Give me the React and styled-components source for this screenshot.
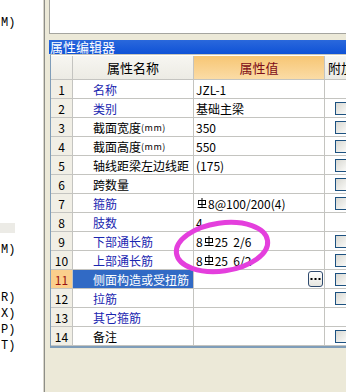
import React from "react";
import styled, { createGlobalStyle } from "styled-components";

const GlobalStyle = createGlobalStyle`
  html, body {
    margin: 0;
    padding: 0;
    background: #ece9d8;
  }
  body {
    font-family: "Noto Sans CJK SC", "Liberation Sans", sans-serif;
    font-size: 12px;
  }
`;

const Page = styled.div`
  display: flex;
  width: 346px;
  height: 392px;
  overflow: hidden;
  background: #ece9d8;
`;

const LeftPane = styled.div`
  width: 43px;
  flex-shrink: 0;
  background: #fff;
  border-right: 1px solid #d8d6cc;
  box-shadow: 1px 0 0 #8e8e88;
  display: flex;
  flex-direction: column;
  overflow: hidden;
`;

const MenuLine = styled.div`
  height: 15px;
  line-height: 15px;
  margin-top: ${(p) => p.$gap || 0}px;
  padding-left: 1px;
  font-family: "Liberation Mono", "DejaVu Sans Mono", monospace;
  font-size: 12px;
  color: #000;
  white-space: pre;
`;

const MenuHighlight = styled.div`
  width: 15px;
  height: 10px;
  margin-top: ${(p) => p.$gap || 0}px;
  background: #ecebe6;
`;

const Gutter = styled.div`
  width: 5px;
  flex-shrink: 0;
`;

const RightPane = styled.div`
  flex: 1;
  display: flex;
  flex-direction: column;
  min-width: 0;
`;

const TopPanel = styled.div`
  height: 33px;
  background: #fff;
  border-left: 1px solid #a5a59f;
  border-bottom: 1px solid #a5a59f;
`;

const TitleBar = styled.div`
  margin-top: 6px;
  height: 14px;
  line-height: 14px;
  padding-left: 1px;
  background: linear-gradient(#2a68dc, #0f52d6);
  color: #fff;
  font-size: 13px;
  white-space: nowrap;
`;

const TableWrap = styled.div`
  position: relative;
  margin-left: 1px;
  border-left: 1px solid #7f9db9;
  border-top: 1px solid #c9c7ba;
  border-bottom: 2px solid #7f9db9;
  background: #fff;
  padding-top: 1px;
`;

const Grid = styled.div`
  display: grid;
  grid-template-columns: 22px 121px 131px 60px;
  grid-template-rows: 24px repeat(14, 19px);
`;

const Cell = styled.div`
  box-sizing: border-box;
  border-right: 1px solid #c4c4c0;
  border-bottom: 1px solid #c4c4c0;
  display: flex;
  align-items: center;
  white-space: pre;
  overflow: hidden;
  position: relative;
`;

const HeadCell = styled(Cell)`
  justify-content: ${(p) => (p.$left ? "flex-start" : "center")};
  padding-left: ${(p) => (p.$left ? 3 : 0)}px;
  font-size: 13px;
  color: ${(p) => (p.$accent ? "#7d0c17" : "#000")};
  background: ${(p) =>
    p.$accent
      ? "linear-gradient(#f7c674, #fbdca6)"
      : "linear-gradient(#f7f6f1, #ecebe4)"};
`;

const NumCell = styled(Cell)`
  justify-content: center;
  font-size: 12px;
  color: ${(p) => (p.$active ? "#9a1010" : "#000")};
  background: ${(p) => (p.$active ? "#fbcf8c" : "#f1efe6")};
`;

const NameCell = styled(Cell)`
  padding-left: 20px;
  font-size: 12px;
  color: ${(p) => (p.$selected ? "#fff" : p.$blue ? "#1a26b0" : "#000")};
  background: ${(p) => (p.$selected ? "#316ac5" : "#fff")};
`;

const Small = styled.span`
  font-size: 9px;
  letter-spacing: 0.5px;
`;

const ValueCell = styled(Cell)`
  padding-left: 2px;
  font-size: 12px;
  color: #000;
`;

const ExtraCell = styled(Cell)`
  padding-left: 10px;
  border-right: none;
`;

const CheckBox = styled.div`
  width: 11px;
  height: 11px;
  border: 1px solid #1c5180;
  background: linear-gradient(135deg, #d8d8d2, #fbfbf9);
`;

const EllipsisButton = styled.div`
  position: absolute;
  right: 1px;
  top: 1px;
  width: 13px;
  height: 14px;
  border: 1px solid #2f4a6e;
  border-radius: 3px;
  background: linear-gradient(#ffffff, #e6e6e0);
  display: flex;
  align-items: center;
  justify-content: center;
`;

const Marker = styled.svg`
  position: absolute;
  left: 115px;
  top: 160px;
  pointer-events: none;
`;

const Bar = () => (
  <svg width="10" height="12" viewBox="0 0 10 12" style={{ margin: "0 1px" }}>
    <rect x="1.5" y="3.5" width="7" height="4" fill="none" stroke="#000" />
    <line x1="5" y1="1" x2="5" y2="10" stroke="#000" />
    <line x1="0.5" y1="10.5" x2="9.5" y2="10.5" stroke="#000" />
  </svg>
);

const Dots = () => (
  <svg width="11" height="4" viewBox="0 0 11 4">
    <rect x="0.5" y="1" width="2" height="2" fill="#000" />
    <rect x="4.5" y="1" width="2" height="2" fill="#000" />
    <rect x="8.5" y="1" width="2" height="2" fill="#000" />
  </svg>
);

const rows = [
  { name: "名称", blue: true, value: "JZL-1", check: false },
  { name: "类别", blue: true, value: "基础主梁", check: true },
  { name: "截面宽度", unit: "(mm)", value: "350", check: true },
  { name: "截面高度", unit: "(mm)", value: "550", check: true },
  { name: "轴线距梁左边线距", value: "(175)", check: true },
  { name: "跨数量", value: "", check: true },
  { name: "箍筋", blue: true, value: <> <Bar />8@100/200(4)</>, check: true },
  { name: "肢数", blue: true, value: "4", check: false },
  { name: "下部通长筋", blue: true, value: <>8<Bar />25  2/6</>, check: true },
  { name: "上部通长筋", blue: true, value: <>8<Bar />25  6/2</>, check: true },
  { name: "侧面构造或受扭筋", selected: true, value: "", check: true, button: true },
  { name: "拉筋", blue: true, value: "", check: true },
  { name: "其它箍筋", blue: true, value: "", check: false },
  { name: "备注", value: "", check: true },
];

export default function App() {
  return (
    <>
      <GlobalStyle />
      <Page>
        <LeftPane>
          <MenuLine $gap={16}>M)</MenuLine>
          <MenuHighlight $gap={192} />
          <MenuLine $gap={10}>M)</MenuLine>
          <MenuLine $gap={33}>R)</MenuLine>
          <MenuLine $gap={1}>X)</MenuLine>
          <MenuLine $gap={1}>P)</MenuLine>
          <MenuLine $gap={1}>T)</MenuLine>
        </LeftPane>
        <Gutter />
        <RightPane>
          <TopPanel />
          <TitleBar>属性编辑器</TitleBar>
          <TableWrap>
            <Grid>
              <HeadCell />
              <HeadCell>属性名称</HeadCell>
              <HeadCell $accent>属性值</HeadCell>
              <HeadCell $left>附加</HeadCell>
              {rows.map((r, i) => (
                <React.Fragment key={i}>
                  <NumCell $active={r.selected}>{i + 1}</NumCell>
                  <NameCell $blue={r.blue} $selected={r.selected}>
                    {r.name}
                    {r.unit && <Small>{r.unit}</Small>}
                  </NameCell>
                  <ValueCell>
                    {r.value}
                    {r.button && (
                      <EllipsisButton>
                        <Dots />
                      </EllipsisButton>
                    )}
                  </ValueCell>
                  <ExtraCell>{r.check && <CheckBox />}</ExtraCell>
                </React.Fragment>
              ))}
            </Grid>
            <Marker width="112" height="66" viewBox="0 0 112 66">
              <ellipse
                cx="56"
                cy="32"
                rx="46"
                ry="24"
                fill="none"
                stroke="#e43fdd"
                strokeWidth="5"
                transform="rotate(-8 56 32)"
              />
            </Marker>
          </TableWrap>
        </RightPane>
      </Page>
    </>
  );
}
